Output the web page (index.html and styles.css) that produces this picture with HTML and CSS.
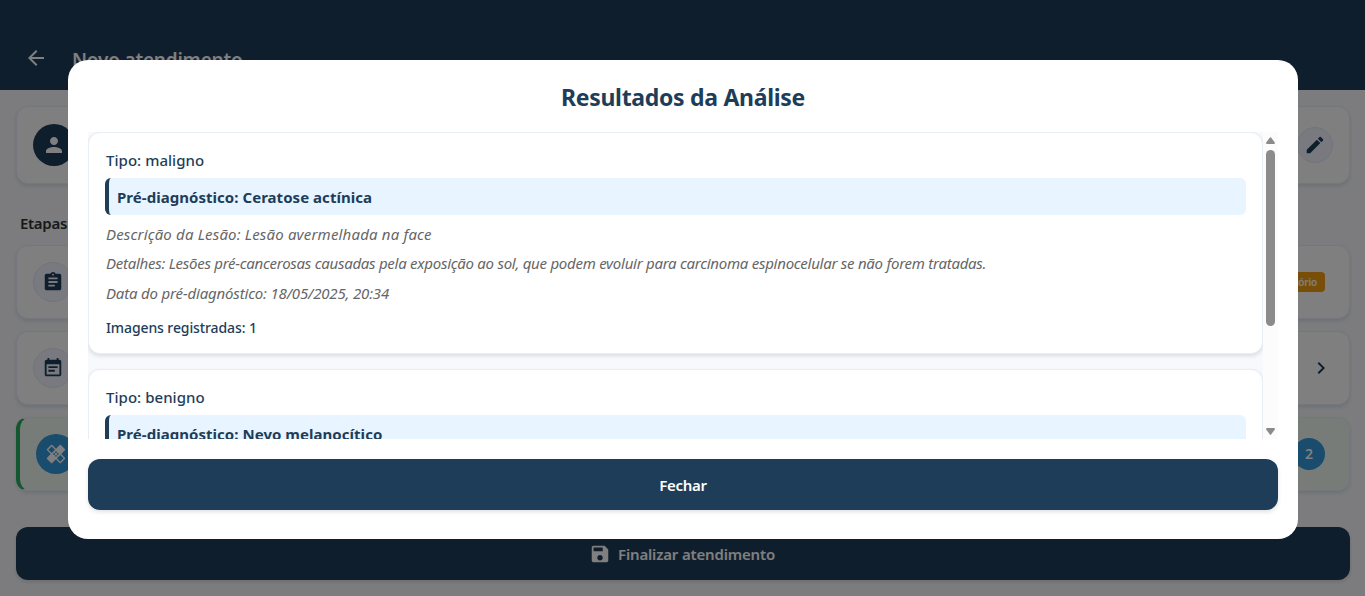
FILE: index.html
```
<!DOCTYPE html>
<html lang="pt-BR">
<head>
<meta charset="utf-8">
<title>Novo atendimento</title>
<link rel="stylesheet" href="styles.css">
</head>
<body>
<div class="page">
  <header class="header">
    <svg class="icon24" viewBox="0 0 24 24"><path d="M20 11H7.83l5.59-5.59L12 4l-8 8 8 8 1.41-1.41L7.83 13H20v-2z"/></svg>
    <h1 class="header-title">Novo atendimento</h1>
  </header>
  <main class="content">
    <section class="card patient">
      <div class="avatar"><svg class="icon24" viewBox="0 0 24 24"><path d="M12 12c2.21 0 4-1.79 4-4s-1.79-4-4-4-4 1.79-4 4 1.79 4 4 4zm0 2c-2.67 0-8 1.34-8 4v2h16v-2c0-2.66-5.33-4-8-4z"/></svg></div>
      <div class="edit"><svg class="icon22" viewBox="0 0 24 24"><path d="M3 17.25V21h3.75L17.81 9.94l-3.75-3.75L3 17.25zM20.71 7.04a1 1 0 0 0 0-1.41l-2.34-2.34a1 1 0 0 0-1.41 0l-1.83 1.83 3.75 3.75 1.83-1.83z"/></svg></div>
    </section>
    <h2 class="steps-title">Etapas</h2>
    <div class="steps">
      <section class="card step">
        <div class="step-icon"><svg class="icon22" viewBox="0 0 24 24"><path d="M19 3h-4.18C14.4 1.84 13.3 1 12 1s-2.4.84-2.82 2H5c-1.1 0-2 .9-2 2v14c0 1.1.9 2 2 2h14c1.1 0 2-.9 2-2V5c0-1.1-.9-2-2-2zm-7 0c.55 0 1 .45 1 1s-.45 1-1 1-1-.45-1-1 .45-1 1-1zm2 14H7v-2h7v2zm3-4H7v-2h10v2zm0-4H7V7h10v2z"/></svg></div>
        <span class="badge">Obrigatório</span>
      </section>
      <section class="card step">
        <div class="step-icon"><svg class="icon22" viewBox="0 0 24 24"><path d="M17 10H7v2h10v-2zm2-7h-1V1h-2v2H8V1H6v2H5c-1.11 0-2 .9-2 2v14c0 1.1.89 2 2 2h14c1.1 0 2-.9 2-2V5c0-1.1-.9-2-2-2zm0 16H5V8h14v11zm-5-5H7v2h7v-2z"/></svg></div>
        <svg class="icon24 chevron" viewBox="0 0 24 24"><path d="M10 6 8.590 7.410 13.170 12l-4.580 4.590L10 18l6-6z"/></svg>
      </section>
      <section class="card step done">
        <div class="step-icon active"><svg class="icon22" viewBox="0 0 24 24"><path fill-rule="evenodd" d="M17.730 12.020l3.980-3.980a1 1 0 0 0 0-1.410l-4.340-4.340a1 1 0 0 0-1.410 0l-3.980 3.980L8 2.290a1 1 0 0 0-1.410 0L2.250 6.630a1 1 0 0 0 0 1.410l3.980 3.980L2.250 16a1 1 0 0 0 0 1.410l4.340 4.340c.39.39 1.020.39 1.410 0l3.980-3.980 3.980 3.980c.2.2.45.29.71.29s.51-.1.710-.29l4.340-4.340a1 1 0 0 0 0-1.410l-3.990-3.980zM12 9a1 1 0 1 1 0 2 1 1 0 0 1 0-2zm-4.710 1.960L3.660 7.340l3.630-3.630 3.620 3.620-3.620 3.630zM10 13a1 1 0 1 1 0-2 1 1 0 0 1 0 2zm2 2a1 1 0 1 1 0-2 1 1 0 0 1 0 2zm2-4a1 1 0 1 1 0 2 1 1 0 0 1 0-2zm2.660 9.340-3.630-3.620 3.630-3.630 3.620 3.620-3.620 3.630z"/></svg></div>
        <span class="count">2</span>
      </section>
    </div>
    <button class="button finish"><svg class="icon22" viewBox="0 0 24 24"><path d="M17 3H5c-1.110 0-2 .9-2 2v14c0 1.100.89 2 2 2h14c1.100 0 2-.9 2-2V7l-4-4zm-5 16c-1.660 0-3-1.340-3-3s1.340-3 3-3 3 1.340 3 3-1.340 3-3 3zm3-10H5V5h10v4z"/></svg><span>Finalizar atendimento</span></button>
  </main>
</div>
<div class="overlay">
  <div class="modal">
    <h2 class="modal-title">Resultados da Análise</h2>
    <div class="scroller">
      <div class="results">
        <article class="result">
          <p class="type">Tipo: maligno</p>
          <p class="diagnosis">Pré-diagnóstico: Ceratose actínica</p>
          <p class="description">Descrição da Lesão: Lesão avermelhada na face</p>
          <p class="details">Detalhes: Lesões pré-cancerosas causadas pela exposição ao sol, que podem evoluir para carcinoma espinocelular se não forem tratadas.</p>
          <p class="date">Data do pré-diagnóstico: 18/05/2025, 20:34</p>
          <p class="images">Imagens registradas: 1</p>
        </article>
        <article class="result">
          <p class="type">Tipo: benigno</p>
          <p class="diagnosis">Pré-diagnóstico: Nevo melanocítico</p>
        </article>
      </div>
      <div class="scrollbar">
        <svg class="arrow" viewBox="0 0 9 7"><path d="M3.700.8Q4.500-.2 5.300.8L8.800 5.500Q9.300 7 8 7H1Q-.3 7 .2 5.500z"/></svg>
        <div class="thumb"></div>
        <svg class="arrow down" viewBox="0 0 9 7"><path d="M3.700 6.200Q4.500 7.200 5.300 6.200L8.800 1.500Q9.300 0 8 0H1Q-.3 0 .2 1.500z"/></svg>
      </div>
    </div>
    <button class="button close">Fechar</button>
  </div>
</div>
</body>
</html>
```
FILE: styles.css
```
* { box-sizing: border-box; margin: 0; padding: 0; }
body { font-family: "Noto Sans", "Open Sans", sans-serif; background: #f8f9fd; color: #1e3d59; overflow: hidden; }
svg { display: block; fill: currentColor; flex: none; }
.page { height: 596px; }
.icon24 { width: 24px; height: 24px; }
.icon22 { width: 22px; height: 22px; }

.header { height: 90px; padding: 46px 24px 0; display: flex; align-items: flex-start; gap: 24px; background: #1e3d59; color: #fff; }
.header-title { font-size: 19px; line-height: 28px; font-weight: 600; letter-spacing: -0.2px; }

.content { padding: 16px 15px 0 16px; }
.card { display: flex; align-items: center; justify-content: space-between; background: #fff; border: 1px solid #e8eef7; border-radius: 12px; box-shadow: 0 2px 4px rgba(30, 61, 89, 0.14); }
.patient { height: 78px; padding: 0 16px; }
.avatar { width: 42px; height: 42px; border-radius: 50%; background: #1e3d59; color: #fff; display: grid; place-items: center; }
.edit { width: 36px; height: 36px; border-radius: 50%; background: #f0f5ff; border: 1px solid #e1e8f5; display: grid; place-items: center; }
.steps-title { margin: 27px 4px 0; font-size: 15px; line-height: 24px; font-weight: 600; letter-spacing: -0.3px; color: #333; }
.steps { margin-top: 10px; display: flex; flex-direction: column; gap: 12px; }
.step { height: 74px; padding: 0 24px 0 16px; }
.step-icon { width: 40px; height: 40px; border-radius: 50%; background: #f0f5ff; border: 1px solid #e1e8f5; display: grid; place-items: center; }
.step-icon.active { background: #3498db; border: 0; color: #fff; }
.badge { height: 20px; padding: 0 8px; border-radius: 4px; background: #f39c12; color: #fff; font-size: 10px; line-height: 20px; font-weight: 600; letter-spacing: -0.2px; }
.chevron { margin-right: -8px; }
.done { background: #f0f9f0; border-left: 4px solid #27ae60; }
.count { width: 32px; height: 32px; border-radius: 50%; background: #3498db; color: #fff; text-align: center; font-size: 14px; line-height: 32px; font-weight: 600; }

.button { width: 100%; border: 0; border-radius: 12px; display: flex; align-items: center; justify-content: center; background: #1e3d59; color: #fff; font-family: inherit; font-size: 15px; font-weight: 600; box-shadow: 0 2px 4px rgba(0, 0, 0, 0.12); }
.finish { height: 53px; margin-top: 36px; padding-right: 2px; gap: 7px; letter-spacing: -0.17px; }

.overlay { position: fixed; inset: 0; background: rgba(0, 0, 0, 0.5); padding: 60px 67px 57px 68px; }
.modal { height: 479px; padding: 20px; border-radius: 20px; background: #fff; }
.modal-title { height: 52px; line-height: 34px; text-align: center; font-size: 23px; font-weight: 700; letter-spacing: -0.3px; }
.scroller { height: 307px; display: flex; overflow: hidden; background: #f8f9fd; }
.results { flex: 1; display: flex; flex-direction: column; gap: 15px; }
.result { flex: none; height: 222px; padding: 16px; background: #fff; border: 1px solid #e8eef5; border-radius: 12px; box-shadow: 0 2px 4px rgba(0, 0, 0, 0.12); }
.type { padding-left: 1px; font-size: 15px; line-height: 22px; font-weight: 500; letter-spacing: 0.04px; }
.diagnosis { margin-top: 7px; height: 37px; padding-left: 8px; border-left: 4px solid #1e3d59; border-radius: 6px; background: #e8f4ff; font-size: 15px; line-height: 38px; font-weight: 700; letter-spacing: 0.04px; }
.description, .details, .date { padding-left: 1px; font-size: 15px; line-height: 24px; font-style: italic; color: #666; }
.description { margin-top: 7px; letter-spacing: 0.18px; }
.details { margin-top: 5px; letter-spacing: -0.26px; }
.date { margin-top: 6px; letter-spacing: -0.17px; }
.images { margin-top: 13px; padding-left: 1px; font-size: 14px; line-height: 20px; font-weight: 500; letter-spacing: -0.1px; }

.scrollbar { width: 15px; padding: 5px 3px 4px; display: flex; flex-direction: column; background: #fcfcfc; color: #8b8b8b; }
.arrow { width: 9px; height: 7px; }
.arrow.down { margin-top: auto; }
.thumb { width: 9px; height: 176px; margin-top: 6px; border-radius: 5px; background: #8b8b8b; }
.close { height: 51px; margin-top: 20px; letter-spacing: -0.28px; }
```
